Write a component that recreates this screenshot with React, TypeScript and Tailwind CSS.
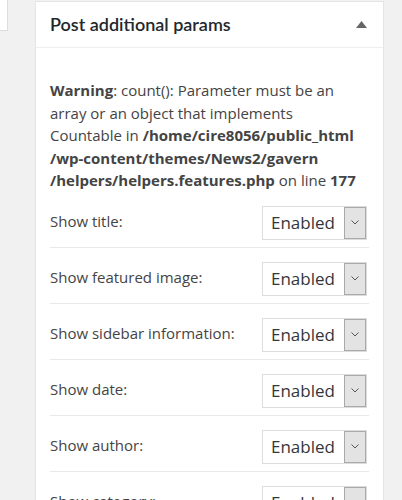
import React from "react";

const font = { fontFamily: '"Open Sans", "Noto Sans", Arial, sans-serif' };
const titleFont = { fontFamily: 'Lato, "Open Sans", Arial, sans-serif' };

function Select() {
  return (
    <div className="flex w-[105px] h-[34px] border border-[#dcdcdc] bg-white">
      <div className="flex-1 flex items-center pl-[8px] text-[17px] text-[#32373c]">Enabled</div>
      <div className="w-[22px] h-full border border-[#a9a9a9] bg-[#e3e3e3] flex items-center justify-center">
        <svg width="8" height="5" viewBox="0 0 8 5">
          <path d="M0.5 0.5 L4 4 L7.5 0.5" fill="none" stroke="#555" strokeWidth="1" />
        </svg>
      </div>
    </div>
  );
}

function Row({ label }: { label: string }) {
  return (
    <div className="flex items-center justify-between border-b border-[#e8e8e8] pt-[14px] pb-[7px] pr-[2px]">
      <span className="text-[15px] text-[#444] -mt-[3px]">{label}</span>
      <Select />
    </div>
  );
}

export default function App() {
  return (
    <div className="w-[402px] h-[500px] bg-[#f1f1f1] overflow-hidden flex" style={font}>
      <div className="w-[35px] shrink-0">
        <div className="w-[8px] h-[31px] bg-white border-r border-b border-[#dddddd]" />
      </div>
      <div className="w-[349px] shrink-0 mt-[1px] bg-white border border-[#e5e5e5] self-start">
        <div className="h-[46px] border-b border-[#eeeeee] flex items-center justify-between pl-[14px] pr-[16px]">
          <span className="text-[18px] font-semibold text-[#23282d]" style={titleFont}>
            Post additional params
          </span>
          <svg width="11" height="7" viewBox="0 0 11 7">
            <path d="M0 7 L5.5 0 L11 7 Z" fill="#666" />
          </svg>
        </div>
        <div className="pl-[14px] pr-[14px] pt-[31px]">
          <div className="text-[15px] leading-[22.5px] text-[#444]">
            <b className="font-bold">Warning</b>: count(): Parameter must be an
            <br />
            array or an object that implements
            <br />
            Countable in <b className="font-bold">/home/cire8056/public_html</b>
            <br />
            <b className="font-bold">/wp-content/themes/News2/gavern</b>
            <br />
            <b className="font-bold">/helpers/helpers.features.php</b> on line <b className="font-bold">177</b>
          </div>
          <Row label="Show title:" />
          <Row label="Show featured image:" />
          <Row label="Show sidebar information:" />
          <Row label="Show date:" />
          <Row label="Show author:" />
          <Row label="Show category:" />
          <Row label="Show tags:" />
        </div>
      </div>
    </div>
  );
}
